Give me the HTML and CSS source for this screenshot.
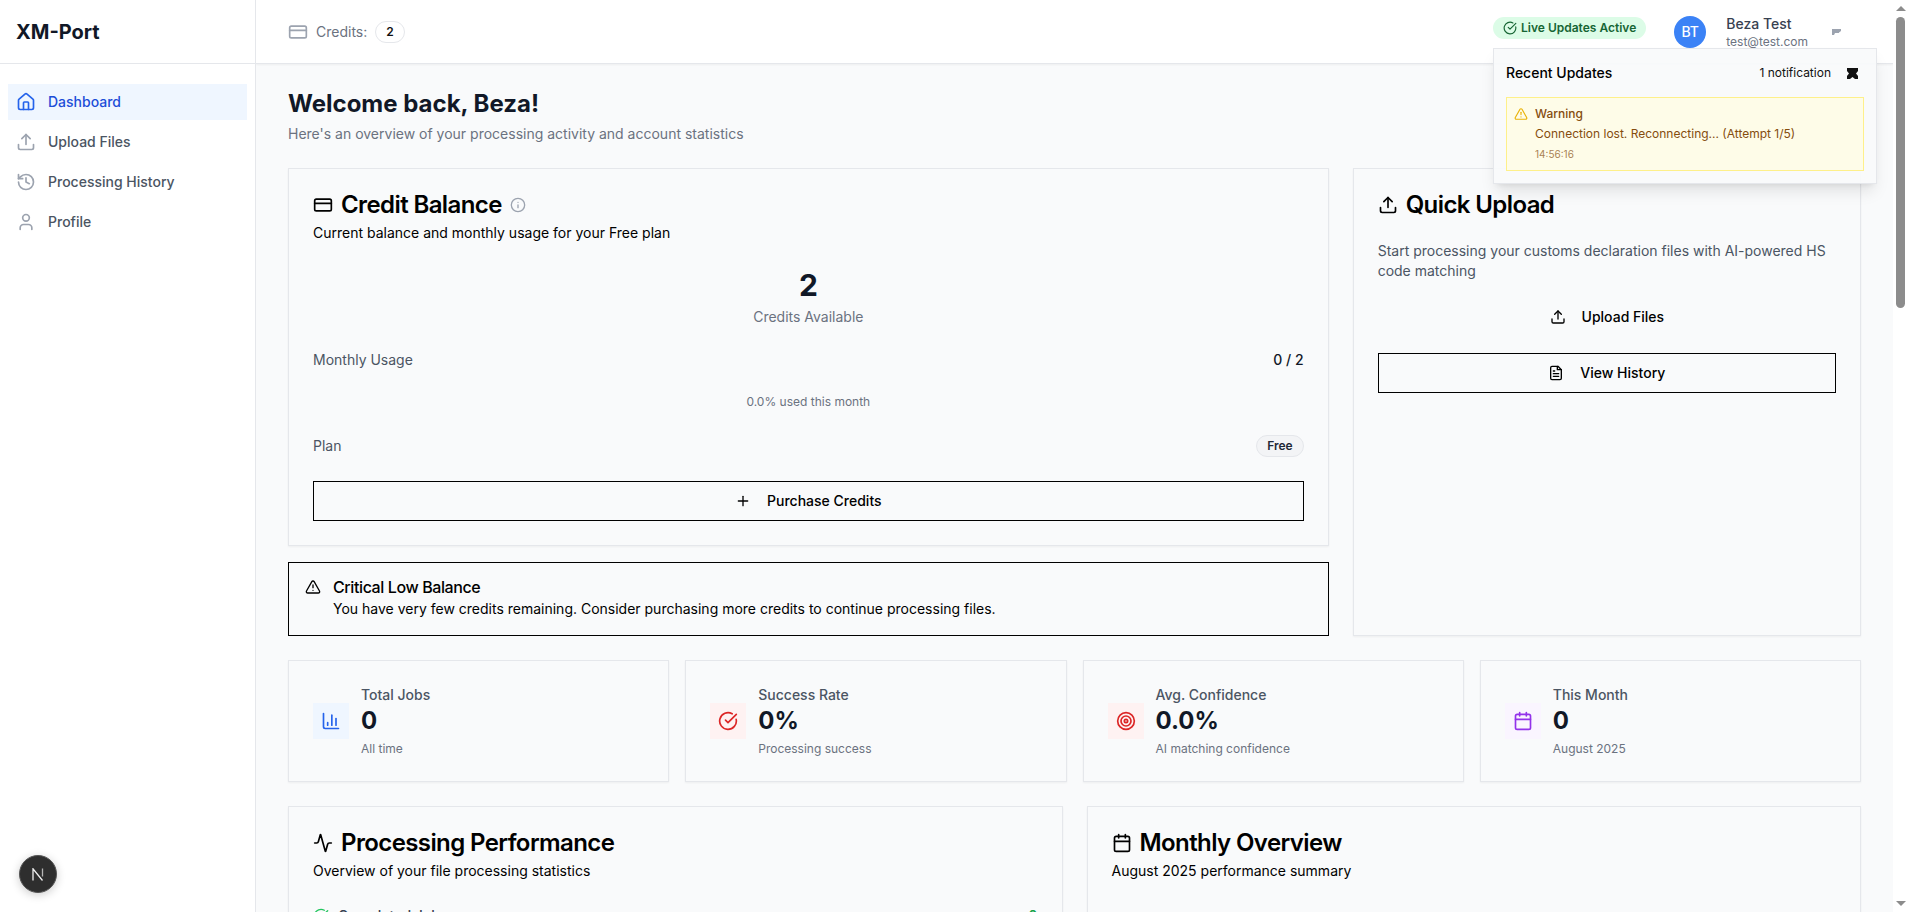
FILE: index.html
```html
<!DOCTYPE html>
<html lang="en">
<head>
    <meta charset="UTF-8">
    <title>XM-Port Dashboard</title>
    <link rel="stylesheet" href="styles.css">
</head>
<body>
    <aside class="sidebar">
        <div class="brand">XM-Port</div>
        <nav class="nav">
            <a class="nav-item active">
                <svg class="nav-icon" viewBox="0 0 24 24"><path d="M15 21v-8a1 1 0 0 0-1-1h-4a1 1 0 0 0-1 1v8"/><path d="M3 10a2 2 0 0 1 .709-1.528l7-5.999a2 2 0 0 1 2.582 0l7 5.999A2 2 0 0 1 21 10v9a2 2 0 0 1-2 2H5a2 2 0 0 1-2-2z"/></svg>
                Dashboard
            </a>
            <a class="nav-item">
                <svg class="nav-icon" viewBox="0 0 24 24"><path d="M21 15v4a2 2 0 0 1-2 2H5a2 2 0 0 1-2-2v-4"/><path d="M17 8l-5-5-5 5"/><path d="M12 3v12"/></svg>
                Upload Files
            </a>
            <a class="nav-item">
                <svg class="nav-icon" viewBox="0 0 24 24"><path d="M3 12a9 9 0 1 0 9-9 9.750 9.750 0 0 0-6.740 2.740L3 8"/><path d="M3 3v5h5"/><path d="M12 7v5l4 2"/></svg>
                Processing History
            </a>
            <a class="nav-item">
                <svg class="nav-icon" viewBox="0 0 24 24"><path d="M19 21v-2a4 4 0 0 0-4-4H9a4 4 0 0 0-4 4v2"/><circle cx="12" cy="7" r="4"/></svg>
                Profile
            </a>
        </nav>
        <div class="next-badge">
            <svg class="next-logo" viewBox="0 0 12 13"><path d="M1 12.500V.8L10.500 12.500"/><path class="next-fade" d="M10.500 .5v8"/></svg>
        </div>
    </aside>

    <div class="main">
        <header class="topbar">
            <div class="credits">
                <svg class="credits-icon" viewBox="0 0 24 24"><rect x="2" y="5" width="20" height="14" rx="2"/><path d="M2 10h20"/></svg>
                <span>Credits:</span>
                <span class="credits-pill">2</span>
            </div>
            <div class="topbar-right">
                <span class="live-pill">
                    <svg class="live-icon" viewBox="0 0 24 24"><path d="M21.800 10A10 10 0 1 1 17 3.340"/><path d="m9 11 3 3L22 4"/></svg>
                    Live Updates Active
                </span>
                <div class="avatar">BT</div>
                <div class="user">
                    <div class="user-name">Beza Test</div>
                    <div class="user-mail">test@test.com</div>
                </div>
                <svg class="user-caret" viewBox="0 0 9 6"><path d="M0 0h9v2L7 3.500V4H3L2 6H0z"/></svg>
            </div>
        </header>

        <div class="updates">
            <div class="updates-head">
                <span class="updates-title">Recent Updates</span>
                <span class="updates-count">1 notification</span>
                <svg class="updates-close" viewBox="0 0 11 11"><path d="M0 0h11v3L9 5.500l2 2.500v3H8L5.500 9 3 11H0V8l2-2.500L0 3z"/></svg>
            </div>
            <div class="warning">
                <svg class="warning-icon" viewBox="0 0 24 24"><path d="m21.730 18-8-14a2 2 0 0 0-3.480 0l-8 14A2 2 0 0 0 4 21h16a2 2 0 0 0 1.730-3"/><path d="M12 9v4"/><path d="M12 17h.01"/></svg>
                <div>
                    <div class="warning-title">Warning</div>
                    <div class="warning-text">Connection lost. Reconnecting... (Attempt 1/5)</div>
                    <div class="warning-time">14:56:16</div>
                </div>
            </div>
        </div>

        <main class="content">
            <h1 class="welcome">Welcome back, Beza!</h1>
            <p class="welcome-sub">Here's an overview of your processing activity and account statistics</p>

            <div class="top-grid">
                <div class="left-col">
                    <section class="card">
                        <h2 class="card-title">
                            <svg class="title-icon" viewBox="0 0 24 24"><rect x="2" y="5" width="20" height="14" rx="2"/><path d="M2 10h20"/></svg>
                            Credit Balance
                            <svg class="info-icon" viewBox="0 0 24 24"><circle cx="12" cy="12" r="10"/><path d="M12 16v-4"/><path d="M12 8h.01"/></svg>
                        </h2>
                        <p class="card-sub">Current balance and monthly usage for your Free plan</p>
                        <div class="balance">
                            <div class="balance-num">2</div>
                            <div class="balance-label">Credits Available</div>
                        </div>
                        <div class="row usage-row">
                            <span class="row-label">Monthly Usage</span>
                            <span class="row-value">0 / 2</span>
                        </div>
                        <div class="used">0.0% used this month</div>
                        <div class="row plan-row">
                            <span class="row-label">Plan</span>
                            <span class="plan-pill">Free</span>
                        </div>
                        <button class="btn btn-outline purchase">
                            <svg class="btn-icon" viewBox="0 0 24 24"><path d="M5 12h14"/><path d="M12 5v14"/></svg>
                            Purchase Credits
                        </button>
                    </section>
                    <div class="alert">
                        <svg class="alert-icon" viewBox="0 0 24 24"><path d="m21.730 18-8-14a2 2 0 0 0-3.480 0l-8 14A2 2 0 0 0 4 21h16a2 2 0 0 0 1.730-3"/><path d="M12 9v4"/><path d="M12 17h.01"/></svg>
                        <div>
                            <div class="alert-title">Critical Low Balance</div>
                            <div class="alert-text">You have very few credits remaining. Consider purchasing more credits to continue processing files.</div>
                        </div>
                    </div>
                </div>

                <section class="card">
                    <h2 class="card-title">
                        <svg class="title-icon" viewBox="0 0 24 24"><path d="M21 15v4a2 2 0 0 1-2 2H5a2 2 0 0 1-2-2v-4"/><path d="M17 8l-5-5-5 5"/><path d="M12 3v12"/></svg>
                        Quick Upload
                    </h2>
                    <p class="upload-text">Start processing your customs declaration files with AI-powered HS code matching</p>
                    <button class="btn btn-plain">
                        <svg class="btn-icon" viewBox="0 0 24 24"><path d="M21 15v4a2 2 0 0 1-2 2H5a2 2 0 0 1-2-2v-4"/><path d="M17 8l-5-5-5 5"/><path d="M12 3v12"/></svg>
                        Upload Files
                    </button>
                    <button class="btn btn-outline">
                        <svg class="btn-icon" viewBox="0 0 24 24"><path d="M15 2H6a2 2 0 0 0-2 2v16a2 2 0 0 0 2 2h12a2 2 0 0 0 2-2V7z"/><path d="M14 2v5h6"/><path d="M16 13H8"/><path d="M16 17H8"/><path d="M10 9H8"/></svg>
                        View History
                    </button>
                </section>
            </div>

            <div class="stats">
                <div class="stat">
                    <div class="stat-icon tint-blue">
                        <svg viewBox="0 0 24 24"><path d="M3 3v16a2 2 0 0 0 2 2h16"/><path d="M18 17V9"/><path d="M13 17V5"/><path d="M8 17v-3"/></svg>
                    </div>
                    <div>
                        <div class="stat-label">Total Jobs</div>
                        <div class="stat-value">0</div>
                        <div class="stat-note">All time</div>
                    </div>
                </div>
                <div class="stat">
                    <div class="stat-icon tint-red">
                        <svg viewBox="0 0 24 24"><path d="M21.800 10A10 10 0 1 1 17 3.340"/><path d="m9 11 3 3L22 4"/></svg>
                    </div>
                    <div>
                        <div class="stat-label">Success Rate</div>
                        <div class="stat-value">0%</div>
                        <div class="stat-note">Processing success</div>
                    </div>
                </div>
                <div class="stat">
                    <div class="stat-icon tint-red">
                        <svg viewBox="0 0 24 24"><circle cx="12" cy="12" r="10"/><circle cx="12" cy="12" r="6"/><circle cx="12" cy="12" r="2"/></svg>
                    </div>
                    <div>
                        <div class="stat-label">Avg. Confidence</div>
                        <div class="stat-value">0.0%</div>
                        <div class="stat-note">AI matching confidence</div>
                    </div>
                </div>
                <div class="stat">
                    <div class="stat-icon tint-purple">
                        <svg viewBox="0 0 24 24"><path d="M8 2v4"/><path d="M16 2v4"/><rect x="3" y="4" width="18" height="18" rx="2"/><path d="M3 10h18"/></svg>
                    </div>
                    <div>
                        <div class="stat-label">This Month</div>
                        <div class="stat-value">0</div>
                        <div class="stat-note">August 2025</div>
                    </div>
                </div>
            </div>

            <div class="bottom-grid">
                <section class="card">
                    <h2 class="card-title">
                        <svg class="title-icon" viewBox="0 0 24 24"><path d="M22 12h-2.480a2 2 0 0 0-1.930 1.460l-2.350 8.360a.25.25 0 0 1-.48 0L9.240 2.180a.25.25 0 0 0-.48 0l-2.350 8.360A2 2 0 0 1 4.490 12H2"/></svg>
                        Processing Performance
                    </h2>
                    <p class="card-sub">Overview of your file processing statistics</p>
                    <div class="row perf-row">
                        <span class="perf-label">
                            <svg class="perf-icon" viewBox="0 0 24 24"><path d="M21.800 10A10 10 0 1 1 17 3.340"/><path d="m9 11 3 3L22 4"/></svg>
                            Completed Jobs
                        </span>
                        <span class="perf-value">0</span>
                    </div>
                </section>
                <section class="card">
                    <h2 class="card-title">
                        <svg class="title-icon" viewBox="0 0 24 24"><path d="M8 2v4"/><path d="M16 2v4"/><rect x="3" y="4" width="18" height="18" rx="2"/><path d="M3 10h18"/></svg>
                        Monthly Overview
                    </h2>
                    <p class="card-sub">August 2025 performance summary</p>
                </section>
            </div>
        </main>
    </div>

    <div class="scrollbar">
        <span class="scroll-up"></span>
        <span class="scroll-thumb"></span>
        <span class="scroll-down"></span>
    </div>
</body>
</html>
```

FILE: styles.css
```css
* {
    box-sizing: border-box;
}

html, body {
    height: 100%;
    margin: 0;
}

body {
    display: flex;
    overflow: hidden;
    font-family: 'Inter', sans-serif;
    font-size: 14px;
    line-height: 20px;
    color: #111827;
    background-color: #f9fafb;
}

svg {
    fill: none;
    stroke: currentColor;
    stroke-width: 2;
    stroke-linecap: round;
    stroke-linejoin: round;
    flex-shrink: 0;
}

/* sidebar */
.sidebar {
    position: relative;
    width: 256px;
    flex-shrink: 0;
    background-color: #fff;
    border-right: 1px solid #e5e7eb;
}

.brand {
    height: 64px;
    padding: 0 16px;
    display: flex;
    align-items: center;
    font-size: 20px;
    font-weight: 700;
    border-bottom: 1px solid #e5e7eb;
}

.nav {
    padding: 20px 8px;
}

.nav-item {
    display: flex;
    align-items: center;
    gap: 12px;
    height: 36px;
    padding: 0 8px;
    margin-bottom: 4px;
    font-weight: 500;
    color: #4b5563;
}

.nav-item.active {
    background-color: #eff6ff;
    color: #1d4ed8;
}

.nav-icon {
    width: 20px;
    height: 20px;
    color: #9ca3af;
}

.active .nav-icon {
    color: #2563eb;
}

.next-badge {
    position: absolute;
    left: 19px;
    bottom: 19px;
    width: 38px;
    height: 38px;
    border-radius: 50%;
    display: flex;
    align-items: center;
    justify-content: center;
    background-color: #2e2e2e;
    color: #eee;
    border: 1px solid #555;
    box-shadow: 0 2px 10px rgba(0, 0, 0, 0.2);
}

.next-logo {
    width: 12px;
    height: 13px;
    stroke-width: 1.3;
    stroke-linecap: butt;
    stroke-linejoin: miter;
}

.next-fade {
    opacity: 0.7;
}

/* main area */
.main {
    position: relative;
    flex: 1;
    min-width: 0;
    height: 100%;
    overflow: hidden;
}

.scrollbar {
    width: 15px;
    flex-shrink: 0;
    display: flex;
    flex-direction: column;
    align-items: center;
    padding: 6px 0;
    background-color: #fff;
}

.scroll-up, .scroll-down {
    width: 0;
    height: 0;
    border-left: 5px solid transparent;
    border-right: 5px solid transparent;
}

.scroll-up {
    border-bottom: 5px solid #8c8c8c;
}

.scroll-down {
    margin-top: auto;
    border-top: 5px solid #8c8c8c;
}

.scroll-thumb {
    width: 9px;
    height: 291px;
    margin-top: 6px;
    border-radius: 5px;
    background-color: #8c8c8c;
}

.topbar {
    height: 64px;
    padding: 0 32px;
    display: flex;
    align-items: center;
    justify-content: space-between;
    background-color: #fff;
    border-bottom: 1px solid #e5e7eb;
    box-shadow: 0 1px 2px rgba(0, 0, 0, 0.05);
}

.credits {
    display: flex;
    align-items: center;
    gap: 8px;
    color: #6b7280;
}

.credits-icon {
    width: 20px;
    height: 20px;
    color: #9ca3af;
}

.credits-pill {
    padding: 2px 10px;
    height: 22px;
    border: 1px solid #e5e7eb;
    border-radius: 999px;
    font-size: 12px;
    line-height: 16px;
    font-weight: 600;
    color: #111;
}

.topbar-right {
    display: flex;
    align-items: center;
}

.live-pill {
    display: flex;
    align-items: center;
    gap: 4px;
    height: 22px;
    padding: 0 10px;
    margin: 0 28px 8px 0;
    border-radius: 999px;
    background-color: #dcfce7;
    color: #166534;
    font-size: 12px;
    font-weight: 600;
}

.live-icon {
    width: 14px;
    height: 14px;
}

.avatar {
    width: 32px;
    height: 32px;
    border-radius: 50%;
    display: flex;
    align-items: center;
    justify-content: center;
    margin-right: 20px;
    background-color: #3b82f6;
    color: #fff;
    font-weight: 500;
}

.user-name {
    font-weight: 500;
    color: #374151;
}

.user-mail {
    font-size: 12px;
    line-height: 16px;
    color: #6b7280;
}

.user-caret {
    width: 9px;
    height: 6px;
    margin: 0 20px 0 24px;
    fill: #9ca3af;
    stroke: none;
}

/* notification panel */
.updates {
    position: absolute;
    top: 48px;
    right: 16px;
    z-index: 5;
    width: 384px;
    padding: 12px;
    background-color: rgba(249, 250, 251, 0.93);
    border: 1px solid #e5e7eb;
    box-shadow: 0 10px 15px -3px rgba(0, 0, 0, 0.1), 0 4px 6px -4px rgba(0, 0, 0, 0.1);
}

.updates-head {
    display: flex;
    align-items: center;
    height: 24px;
    margin-bottom: 12px;
}

.updates-title {
    flex: 1;
    font-weight: 500;
    color: #000;
}

.updates-count {
    font-size: 12px;
    color: #111;
}

.updates-close {
    width: 11px;
    height: 11px;
    margin: 0 6px 0 16px;
    fill: #111;
    stroke: none;
}

.warning {
    display: flex;
    gap: 7px;
    padding: 8px 8px 8px 7px;
    background-color: #fefce8;
    border: 1px solid #fef08a;
    font-size: 12px;
    color: #854d0e;
}

.warning-icon {
    width: 14px;
    height: 14px;
    margin-top: 1px;
    color: #eab308;
}

.warning-title {
    font-weight: 500;
    line-height: 16px;
}

.warning-text {
    margin-top: 4px;
    line-height: 16px;
}

.warning-time {
    margin-top: 4px;
    font-size: 10px;
    line-height: 16px;
    opacity: 0.7;
}

/* page content */
.content {
    padding: 24px 32px;
}

.welcome {
    margin: 0;
    font-size: 24px;
    line-height: 32px;
    font-weight: 700;
}

.welcome-sub {
    margin: 4px 0 24px;
    color: #6b7280;
}

.top-grid {
    display: grid;
    grid-template-columns: repeat(3, 1fr);
    gap: 24px;
}

.left-col {
    grid-column: span 2;
    display: flex;
    flex-direction: column;
    gap: 16px;
    min-width: 0;
}

.card {
    padding: 24px;
    background-color: #f9fafb;
    border: 1px solid #e5e7eb;
    box-shadow: 0 1px 2px rgba(0, 0, 0, 0.05);
}

.card-title {
    display: flex;
    align-items: center;
    gap: 8px;
    margin: 0;
    font-size: 24px;
    line-height: 24px;
    font-weight: 600;
    letter-spacing: -0.6px;
    color: #000;
}

.title-icon {
    width: 20px;
    height: 20px;
}

.info-icon {
    width: 16px;
    height: 16px;
    color: #9ca3af;
}

.card-sub {
    margin: 6px 0 0;
    color: #000;
}

.balance {
    margin-top: 24px;
    text-align: center;
}

.balance-num {
    font-size: 30px;
    line-height: 36px;
    font-weight: 700;
}

.balance-label {
    margin-top: 4px;
    color: #6b7280;
}

.row {
    display: flex;
    align-items: center;
    justify-content: space-between;
}

.usage-row {
    margin-top: 23px;
    height: 20px;
}

.row-label {
    color: #4b5563;
}

.row-value {
    font-weight: 500;
}

.used {
    margin-top: 24px;
    font-size: 12px;
    line-height: 16px;
    text-align: center;
    color: #6b7280;
}

.plan-row {
    margin-top: 25px;
    height: 22px;
}

.plan-pill {
    height: 22px;
    padding: 2px 10px;
    border-radius: 999px;
    background-color: #f3f4f6;
    border: 1px solid #e5e7eb;
    font-size: 12px;
    line-height: 16px;
    font-weight: 600;
    color: #1f2937;
}

.btn {
    width: 100%;
    height: 40px;
    display: flex;
    align-items: center;
    justify-content: center;
    gap: 16px;
    font-family: inherit;
    font-size: 14px;
    line-height: 20px;
    font-weight: 500;
    color: #000;
    background: none;
}

.btn-outline {
    border: 1px solid #000;
}

.btn-plain {
    border: 0;
    margin-bottom: 16px;
}

.purchase {
    margin-top: 24px;
}

.btn-icon {
    width: 16px;
    height: 16px;
}

.upload-text {
    margin: 24px 0 16px;
    color: #4b5563;
}

.alert {
    display: flex;
    gap: 12px;
    padding: 16px;
    background-color: #f9fafb;
    border: 1px solid #000;
    color: #000;
}

.alert-icon {
    width: 16px;
    height: 16px;
}

.alert-title {
    margin-bottom: 4px;
    font-size: 16px;
    font-weight: 500;
    line-height: 16px;
    letter-spacing: -0.4px;
}

.stats {
    display: grid;
    grid-template-columns: repeat(4, 1fr);
    gap: 16px;
    margin-top: 24px;
}

.stat {
    display: flex;
    align-items: center;
    gap: 12px;
    height: 122px;
    padding: 0 24px;
    border: 1px solid #e5e7eb;
    box-shadow: 0 1px 2px rgba(0, 0, 0, 0.05);
}

.stat-icon {
    width: 36px;
    height: 36px;
    display: flex;
    align-items: center;
    justify-content: center;
}

.stat-icon svg {
    width: 20px;
    height: 20px;
}

.tint-blue {
    background-color: #eff6ff;
    color: #2563eb;
}

.tint-red {
    background-color: #fef2f2;
    color: #dc2626;
}

.tint-purple {
    background-color: #faf5ff;
    color: #9333ea;
}

.stat-label {
    font-weight: 500;
    color: #4b5563;
}

.stat-value {
    font-size: 24px;
    line-height: 32px;
    font-weight: 700;
}

.stat-note {
    font-size: 12px;
    line-height: 16px;
    margin-top: 4px;
    color: #6b7280;
}

.bottom-grid {
    display: grid;
    grid-template-columns: 1fr 1fr;
    gap: 24px;
    margin-top: 24px;
}

.perf-row {
    margin-top: 25px;
}

.perf-label {
    display: flex;
    align-items: center;
    gap: 9px;
    font-weight: 500;
    color: #374151;
}

.perf-icon {
    width: 16px;
    height: 16px;
    color: #22c55e;
}

.perf-value {
    font-weight: 600;
    color: #16a34a;
}
```
